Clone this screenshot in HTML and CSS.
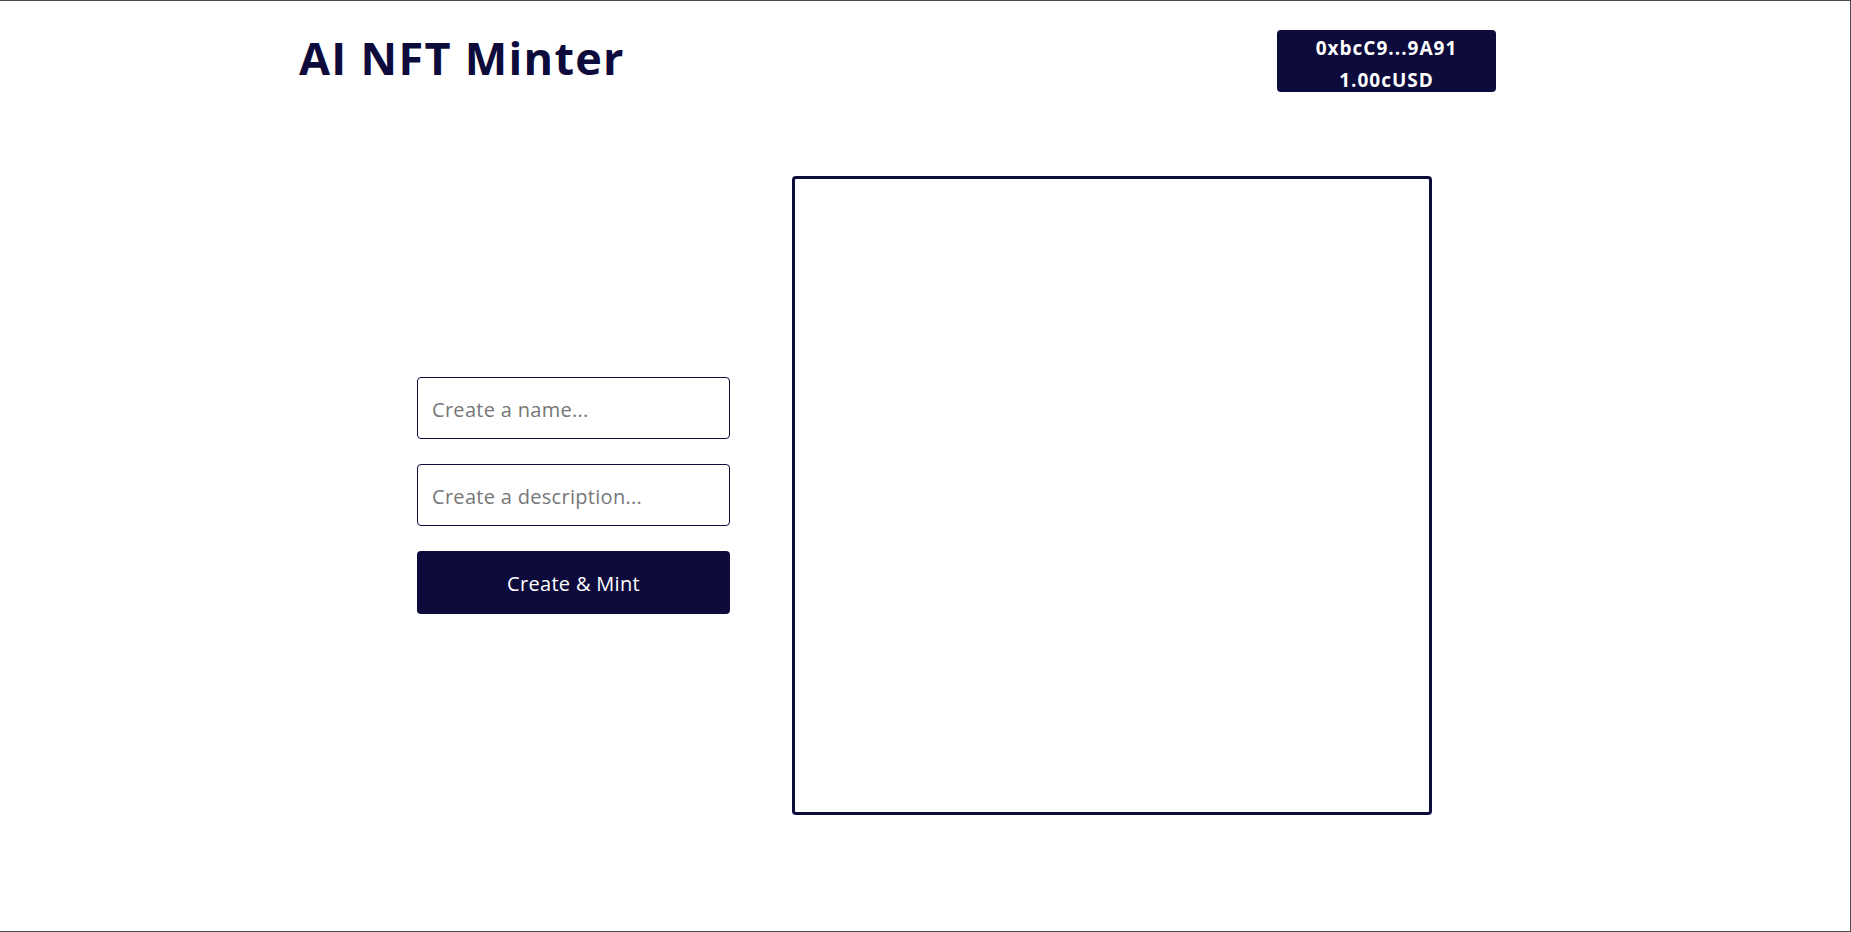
FILE: index.html
```html
<!DOCTYPE html>
<html>
<head>
<meta charset="utf-8">
<title>AI NFT Minter</title>
<link rel="stylesheet" href="styles.css">
</head>
<body>
<div class="page">
  <header class="header">
    <h1 class="title">AI NFT Minter</h1>
    <div class="wallet">
      <span class="wallet-line">0xbcC9...9A91</span>
      <span class="wallet-line">1.00cUSD</span>
    </div>
  </header>
  <main class="main">
    <form class="form">
      <input class="field" type="text" placeholder="Create a name...">
      <input class="field" type="text" placeholder="Create a description...">
      <button class="mint" type="button">Create &amp; Mint</button>
    </form>
    <div class="preview"></div>
  </main>
</div>
</body>
</html>
```
FILE: styles.css
```css
* { box-sizing: border-box; }
html, body { margin: 0; padding: 0; background: #fff; }
body { font-family: "Open Sans", "Liberation Sans", sans-serif; color: #0d0b3b; }

.page {
  width: 1851px;
  height: 932px;
  border-top: 1px solid #4a4a4a;
  border-right: 1px solid #4a4a4a;
  border-bottom: 1px solid #4a4a4a;
}

.header {
  display: flex;
  justify-content: space-between;
  align-items: flex-start;
  width: 1199px;
  margin-left: 297px;
  padding-top: 29px;
}

.title {
  margin: 8px 0 0 2px;
  font-size: 45px;
  font-weight: 700;
  line-height: 40px;
  color: #0d0b3b;
  letter-spacing: 1.3px;
}

.wallet {
  width: 219px;
  height: 62px;
  padding-top: 5px;
  background: #0d0b3b;
  border-radius: 4px;
  display: flex;
  flex-direction: column;
  align-items: center;
  justify-content: center;
  color: #fff;
  font-weight: 700;
  font-size: 19px;
  letter-spacing: 1px;
  line-height: 32px;
}

.main {
  display: flex;
  justify-content: center;
  align-items: center;
  gap: 62px;
  margin-top: 84px;
  padding-right: 1px;
}

.form {
  display: flex;
  flex-direction: column;
  gap: 25px;
  width: 313px;
}

.field {
  height: 62px;
  border: 1px solid #0d0b3b;
  border-radius: 4px;
  padding: 3px 14px 0;
  font-family: inherit;
  font-size: 20px;
  letter-spacing: 0.3px;
  color: #0d0b3b;
  background: #fff;
  outline: none;
}
.field::placeholder { color: #777; }

.mint {
  height: 63px;
  padding-top: 2px;
  border: none;
  border-radius: 4px;
  background: #0d0b3b;
  color: #fff;
  font-family: inherit;
  font-size: 20px;
  letter-spacing: 0.3px;
  cursor: pointer;
}

.preview {
  width: 640px;
  height: 639px;
  border: 3px solid #0d0b3b;
  border-radius: 4px;
}
```
